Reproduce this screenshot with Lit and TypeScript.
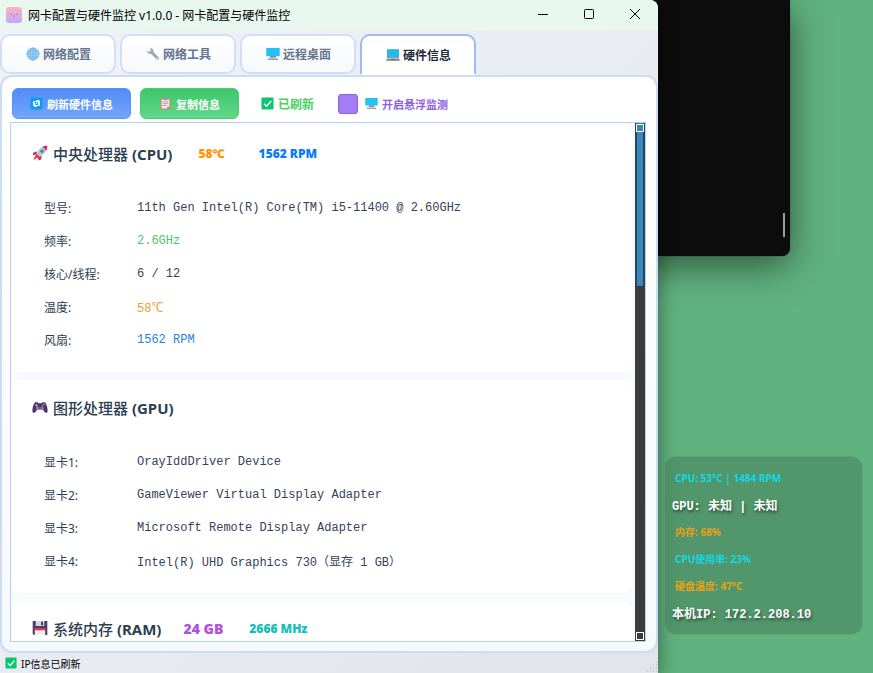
import { LitElement, html, css, svg, nothing, TemplateResult } from "lit";
import { customElement, property, state } from "lit/decorators.js";

const icon = (box: number, body: unknown) =>
  html`<svg viewBox="0 0 ${box} ${box}" aria-hidden="true">${body}</svg>`;

const icons: Record<string, TemplateResult> = {
  app: icon(16, svg`
    <defs><linearGradient id="g" x1="0" y1="0" x2="0" y2="1"><stop offset="0" stop-color="#ffb3c1"/><stop offset="1" stop-color="#c3a6ff"/></linearGradient></defs>
    <rect width="16" height="16" rx="3" fill="url(#g)"/>
    <path d="M4 7q1 1.4 2 0M10 7q1 1.4 2 0M7 9h2" fill="none" stroke="#8b6f9e" stroke-width=".8"/>`),
  globe: icon(14, svg`
    <circle cx="7" cy="7" r="6.4" fill="#a2d3f6"/>
    <g fill="none" stroke="#69b1e6" stroke-width=".7"><circle cx="7" cy="7" r="6"/><ellipse cx="7" cy="7" rx="2.9" ry="6"/><path d="M7 1v12M1 7h12M2 4h10M2 10h10"/></g>`),
  wrench: icon(14, svg`
    <path d="M1 3.4 3.2 5 5 3.6 3.8 1.2C6 .8 8 2.5 7.4 5l5.4 5.6c1 1.3-.8 3.1-2.2 2L5.3 7C2.8 7.5.8 5.5 1 3.4z" fill="#a9a4ac"/>
    <circle cx="11.3" cy="11.5" r=".7" fill="#f2f4f7"/>`),
  monitor: icon(14, svg`
    <rect x=".3" y="1" width="13.4" height="8.2" rx=".5" fill="#25c0f5"/>
    <path d="M4 9.2h6v1.4H4z" fill="#55808f"/><path d="M2 11.4h10v1.6H2z" fill="#a39b9a"/>`),
  laptop: icon(14, svg`
    <path d="M1 1.2h12v8.3H1z" fill="#25b8ec"/><path d="M1 9.5h12v1H1z" fill="#5c7480"/>
    <path d="M.3 11h13.4v2H.3z" fill="#9b9696"/><path d="M5 11h4v1H5z" fill="#716c6c"/>`),
  refresh: icon(14, svg`
    <rect x=".5" y=".5" width="13" height="13" rx="2" fill="#0d9bea"/>
    <path d="M3.2 4.5h3L8 3l2.7 1v5.5H8L6.2 11 3.2 9.5z" fill="#fff"/><path d="M5 6h3.2v2.5M9 8H5.6V5.5" fill="none" stroke="#0d9bea" stroke-width=".9"/>`),
  clipboard: icon(14, svg`
    <rect x="1.5" y="1.3" width="11" height="12.2" rx="1" fill="#d9825f"/><path d="M2.8 2.8h8.4v7.7L9 12.5H2.8z" fill="#eceaf0"/>
    <path d="M5 .5h4v2.8H5z" fill="#9c98a3"/><path d="M4 5.2h6M4 7.2h6M4 9.2h4" stroke="#9b96a5" stroke-width=".9"/><path d="M9 12.5v-2h2.2z" fill="#77717f"/>`),
  check: icon(14, svg`
    <rect x=".5" y=".5" width="13" height="13" rx="1.4" fill="#0ac66c"/><path d="m3.3 7.2 2.7 2.7 5-5.6" fill="none" stroke="#fff" stroke-width="1.5"/>`),
  rocket: icon(16, svg`
    <path d="M5 6.5 1.5 7.5.8 10l3.5-.6zM9.7 11 9 14.5l-2.5.9-.4-3.7z" fill="#c92553"/>
    <path d="M15.3.8c-4.5 0-8 2.5-10.8 7.7l3.2 3.2C12.5 9 15.3 5.5 15.3.8z" fill="#b9c3d2"/>
    <path d="M15.3.8c-2 0-3.3.3-4.7 1l3.7 3.7c.7-1.4 1-2.7 1-4.7z" fill="#ce3158"/>
    <circle cx="10" cy="6.2" r="1.7" fill="#4a86a8"/><path d="M4.5 8.5 1.3 15l6.4-3.3z" fill="#ef3b3f"/>
    <path d="m4.2 10.5-2.5 4 4-2.2z" fill="#e8476a"/>`),
  gamepad: icon(16, svg`
    <path d="M3 3.2h2.5l1 1h3l1-1H13c1.8 2.5 2.8 6 2.6 9-.2 2-2.5 2-3.3.6L11 10.5H5l-1.3 2.3C2.9 14.2.6 14.2.4 12.2.2 9.2 1.2 5.7 3 3.2z" fill="#4a3468"/>
    <circle cx="5.8" cy="8.9" r="1.7" fill="#8c7aad"/><circle cx="10.2" cy="8.9" r="1.7" fill="#8c7aad"/>
    <path d="M3 6.3h2.8M4.4 4.9v2.8" stroke="#b3a5cb"/><circle cx="12" cy="5" r=".7" fill="#f4c343"/><circle cx="13.2" cy="6.4" r=".7" fill="#e0435c"/><circle cx="10.8" cy="6.3" r=".7" fill="#4eb2e8"/>`),
  floppy: icon(16, svg`
    <path d="M.7 1h14.6v14H2L.7 13.7z" fill="#4b3b66"/><path d="M3.7 1h8.6v5H3.7z" fill="#d9d4e2"/><path d="M9 1.7h2v3.5H9z" fill="#4b3b66"/>
    <path d="M2.8 8.5h10.4V15H2.8z" fill="#f1edf4"/><path d="M2.8 8h10.4v2.3H2.8z" fill="#e2344c"/>`),
};

interface Row { label: string; value: string; tone?: string }
interface Metric { text: string; tone: string; large?: boolean }
interface Section { icon: string; name: string; code: string; metrics: Metric[]; rows: Row[] }

const sections: Section[] = [
  {
    icon: "rocket", name: "中央处理器", code: "(CPU)",
    metrics: [{ text: "58℃", tone: "orange" }, { text: "1562 RPM", tone: "blue" }],
    rows: [
      { label: "型号:", value: "11th Gen Intel(R) Core(TM) i5-11400 @ 2.60GHz" },
      { label: "频率:", value: "2.6GHz", tone: "green" },
      { label: "核心/线程:", value: "6 / 12" },
      { label: "温度:", value: "58℃", tone: "amber" },
      { label: "风扇:", value: "1562 RPM", tone: "azure" },
    ],
  },
  {
    icon: "gamepad", name: "图形处理器", code: "(GPU)", metrics: [],
    rows: [
      { label: "显卡1:", value: "OrayIddDriver Device" },
      { label: "显卡2:", value: "GameViewer Virtual Display Adapter" },
      { label: "显卡3:", value: "Microsoft Remote Display Adapter" },
      { label: "显卡4:", value: "Intel(R) UHD Graphics 730（显存 1 GB）" },
    ],
  },
  {
    icon: "floppy", name: "系统内存", code: "(RAM)",
    metrics: [{ text: "24 GB", tone: "purple", large: true }, { text: "2666 MHz", tone: "teal" }],
    rows: [],
  },
];

const tones = css`
  .orange { color: #ff9500; }
  .blue { color: #0a7aff; }
  .green { color: #4cc764; }
  .amber { color: #e8a02c; }
  .azure { color: #2582dc; }
  .purple { color: #af52de; }
  .teal { color: #14bfb8; }
`;

@customElement("hardware-card")
class HardwareCard extends LitElement {
  @property({ attribute: false }) section!: Section;

  static styles = [tones, css`
    :host { display: block; background: #fff; border-radius: 10px; padding: 0 20px 16px; }
    .head { display: flex; align-items: center; height: 54px; margin-bottom: 11px; }
    h2 { display: flex; align-items: center; gap: 5px; margin: 0; font-size: 15px; font-weight: 500; color: #2c3e50; white-space: nowrap; }
    h2 b { font-weight: 700; }
    svg { display: block; width: 16px; height: 16px; }
    .metric { font-size: 12px; font-weight: 900; margin-left: 26px; white-space: nowrap; }
    .metric + .metric { margin-left: 34px; }
    .large { font-size: 14px; margin-left: 22px; }
    .large + .metric { margin-left: 26px; }
    dl { display: grid; grid-template-columns: 93px 1fr; grid-auto-rows: 33px; align-items: center; margin: 0; padding-left: 12px; color: #34435a; }
    dt { font-size: 12px; color: #2c3e50; }
    dd { margin: 0; font: 12px "Liberation Mono", "Noto Sans CJK SC", monospace; white-space: nowrap; }
  `];

  render() {
    const s = this.section;
    return html`
      <div class="head">
        <h2>${icons[s.icon]}<span>${s.name} <b>${s.code}</b></span></h2>
        ${s.metrics.map((m) => html`<span class="metric ${m.tone} ${m.large ? "large" : ""}">${m.text}</span>`)}
      </div>
      ${s.rows.length
        ? html`<dl>${s.rows.map((r) => html`<dt>${r.label}</dt><dd class=${r.tone ?? ""}>${r.value}</dd>`)}</dl>`
        : nothing}
    `;
  }
}

@customElement("monitor-widget")
class MonitorWidget extends LitElement {
  static styles = css`
    :host { display: block; box-sizing: border-box; padding: 7px 7px 8px; border: 1px solid rgba(255, 255, 255, 0.1); border-radius: 12px; background: rgba(68, 122, 88, 0.5); }
    ul { display: grid; grid-auto-rows: 27px; list-style: none; margin: 0; padding: 0; }
    li { display: flex; align-items: center; padding-left: 3px; font-size: 10px; font-weight: 700; white-space: pre; }
    .cyan { color: #10d9e6; }
    .gold { color: #e6a114; }
    .plain { padding: 0; color: #fff; font: 700 12px "Liberation Mono", "Noto Sans CJK SC", monospace; text-shadow: 1px 2px 3px rgba(0, 0, 0, 0.5); }
  `;
  render() {
    return html`<ul>
      <li class="cyan">CPU: 53°C | 1484 RPM</li>
      <li class="plain">GPU: 未知 | 未知</li>
      <li class="gold">内存: 68%</li>
      <li class="cyan">CPU使用率: 23%</li>
      <li class="gold">硬盘温度: 47°C</li>
      <li class="plain">本机IP: 172.2.208.10</li>
    </ul>`;
  }
}

@customElement("app-root")
class AppRoot extends LitElement {
  @state() private active = 3;

  private tabs = [
    { icon: "globe", label: "网络配置" },
    { icon: "wrench", label: "网络工具" },
    { icon: "monitor", label: "远程桌面" },
    { icon: "laptop", label: "硬件信息" },
  ];

  static styles = css`
    :host { display: block; position: relative; height: 100vh; overflow: hidden; background: #60b27e; font-family: "Noto Sans", "Noto Sans CJK SC", sans-serif; font-size: 12px; }
    svg { display: block; width: 100%; height: 100%; }
    button { font: inherit; margin: 0; padding: 0; }
    .terminal { position: absolute; top: 0; left: 0; right: 83px; height: 256px; box-sizing: border-box; display: flex; justify-content: flex-end; align-items: flex-end; padding: 0 5px 19px 0; border-radius: 0 0 8px 0; background: #0c0c0c; box-shadow: 0 10px 36px rgba(0, 0, 0, 0.5), 0 0 1px #222; }
    .caret { width: 2px; height: 24px; background: #9c9c9c; }
    .float { position: absolute; right: 10px; top: 456px; width: 199px; }
    .window { position: absolute; top: 0; left: 0; right: 215px; bottom: 0; display: flex; flex-direction: column; overflow: hidden; border-radius: 0 8px 0 0; background: linear-gradient(135deg, #f0f3f8, #e1e4e9); }
    .shade { position: absolute; top: 0; left: 0; right: 215px; bottom: 0; border-radius: 0 8px 0 0; box-shadow: 0 4px 20px rgba(0, 0, 0, 0.45); }

    .titlebar { display: flex; align-items: center; flex: none; height: 30px; padding-left: 6px; background: #e8f8ee; color: #000; }
    .appicon { width: 16px; height: 16px; margin-right: 6px; }
    h1 { flex: 1; margin: 0; font-size: 12px; font-weight: 400; white-space: nowrap; }
    .winbtn { width: 46px; height: 30px; border: 0; background: none; }
    .winbtn svg { width: 12px; height: 12px; margin: 0 auto; }

    .tabs { display: flex; gap: 4px; flex: none; height: 40px; padding-top: 4px; margin-bottom: 1px; }
    .tab { display: flex; align-items: center; justify-content: center; gap: 3px; width: 116px; height: 40px; padding-left: 1px; border: 2px solid #d3def7; border-radius: 10px; background: linear-gradient(#fff, #f6f9fd); color: #64748b; font-weight: 700; }
    .tab i { width: 14px; height: 14px; }
    .tab.on { height: 41px; border-color: #9bbcf4; border-bottom-color: transparent; border-radius: 10px 10px 0 0; background: #fff; color: #1e293b; }

    .panel { display: flex; flex-direction: column; flex: 1; min-height: 0; padding: 11px 10px 9px 8px; border: 2px solid #ccdcf6; border-radius: 12px; background: linear-gradient(#fff, #f6f9fe); }
    .toolbar { display: flex; align-items: center; flex: none; height: 31px; margin: 0 0 3px 2px; font-size: 11px; font-weight: 700; }
    .action { display: flex; align-items: center; justify-content: center; gap: 4px; height: 31px; padding: 0 17px; border: 1px solid #5a92f3; border-radius: 6px; background: linear-gradient(#4f8df8, #73a5fb); color: #fff; }
    .action i, .note i, .switch i { width: 13px; height: 13px; }
    .copy { margin-left: 9px; padding: 0 18px; border-color: #4cca76; background: linear-gradient(#3cc76b, #62d88b); }
    .note { display: flex; align-items: center; gap: 4px; margin-left: 22px; color: #4cd062; font-size: 12px; }
    .switch { display: flex; align-items: center; gap: 4px; margin-left: 24px; color: #8d62e2; }
    .switch input { appearance: none; width: 20px; height: 20px; margin: 0 3px 0 0; border: 1px solid #8b5cdf; border-radius: 3px; background: #a47cf6; }

    .view { display: flex; flex: 1; min-height: 0; border: 1px solid #b8d1e6; background: #f8fafc; }
    .cards { display: flex; flex-direction: column; gap: 8px; flex: 1; min-width: 0; padding: 3px 3px 0 1px; overflow: hidden; background: #f8fafd; }
    .cards hardware-card { flex: none; }
    .scroll { display: flex; flex-direction: column; justify-content: space-between; width: 10px; background: #3b3b3b; }
    .thumb { display: flex; flex-direction: column; box-sizing: border-box; height: 163px; border: solid #27465c; border-width: 0 2px; background: #3b86ba; }
    .end { box-sizing: border-box; width: 8px; height: 8px; margin: 1px; border: 1px solid #fff; }
    .thumb .end { margin: 1px -1px; }

    .status { display: flex; align-items: center; gap: 4px; flex: none; height: 20px; padding-left: 5px; color: #000; font-size: 10px; }
    .status .ok { width: 12px; height: 12px; }
    .status span { flex: 1; }
    .grip { align-self: flex-end; width: 12px; height: 12px; }
  `;

  render() {
    return html`
      <div class="terminal"><div class="caret"></div></div>
      <div class="shade"></div>
      <monitor-widget class="float"></monitor-widget>
      <main class="window">
        <header class="titlebar">
          <i class="appicon">${icons.app}</i>
          <h1>网卡配置与硬件监控 v1.0.0 - 网卡配置与硬件监控</h1>
          <button class="winbtn" aria-label="最小化"><svg viewBox="0 0 12 12"><path d="M1 5.5h10" stroke="#000"/></svg></button>
          <button class="winbtn" aria-label="最大化"><svg viewBox="0 0 12 12"><rect x="1.5" y=".5" width="9" height="9" rx="1" fill="none" stroke="#000"/></svg></button>
          <button class="winbtn" aria-label="关闭"><svg viewBox="0 0 12 12"><path d="m1 0 10 10M11 0 1 10" stroke="#000"/></svg></button>
        </header>
        <nav class="tabs" role="tablist">
          ${this.tabs.map((t, i) => html`
            <button class="tab ${i === this.active ? "on" : ""}" role="tab" aria-selected=${i === this.active} @click=${() => (this.active = i)}>
              <i>${icons[t.icon]}</i>${t.label}
            </button>`)}
        </nav>
        <section class="panel">
          <div class="toolbar">
            <button class="action"><i>${icons.refresh}</i>刷新硬件信息</button>
            <button class="action copy"><i>${icons.clipboard}</i>复制信息</button>
            <span class="note"><i>${icons.check}</i>已刷新</span>
            <label class="switch"><input type="checkbox" /><i>${icons.monitor}</i>开启悬浮监测</label>
          </div>
          <div class="view">
            <div class="cards">${sections.map((s) => html`<hardware-card .section=${s}></hardware-card>`)}</div>
            <div class="scroll"><div class="thumb"><div class="end"></div></div><div class="end"></div></div>
          </div>
        </section>
        <footer class="status">
          <i class="ok">${icons.check}</i><span>IP信息已刷新</span>
          <svg class="grip" viewBox="0 0 12 12"><path d="M10 1h1M7 4h1M10 4h1M4 7h1M7 7h1M10 7h1M1 10h1M4 10h1M7 10h1M10 10h1" stroke="#aab0b8"/></svg>
        </footer>
      </main>
    `;
  }
}
